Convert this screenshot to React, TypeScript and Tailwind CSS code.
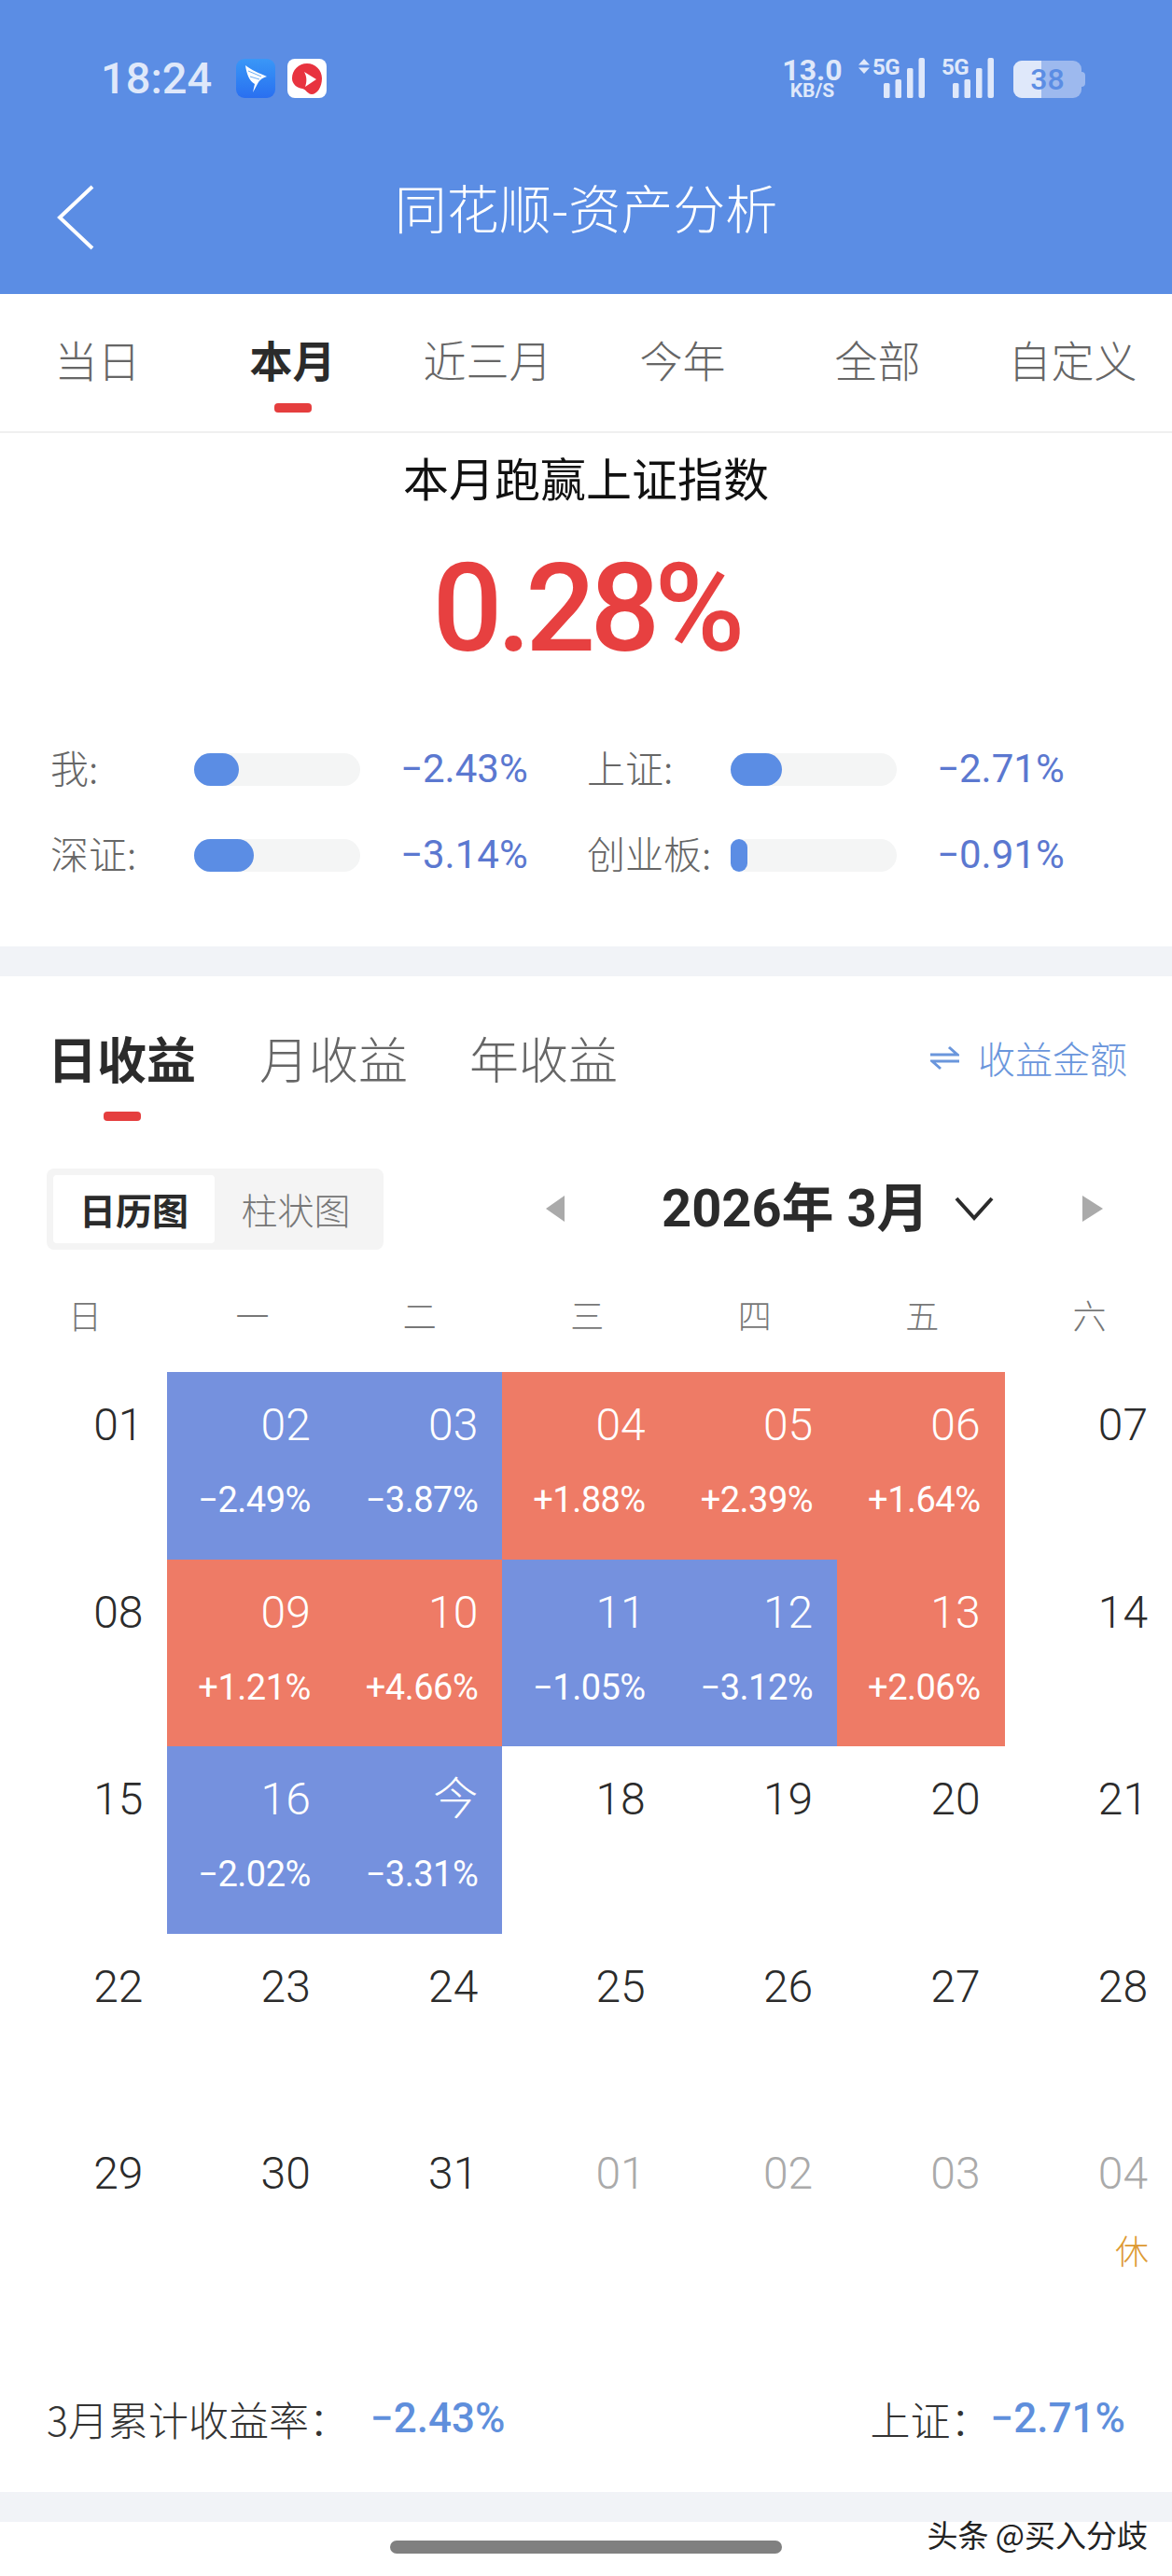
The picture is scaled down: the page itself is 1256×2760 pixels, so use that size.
import React from "react";

const cjk = "font-['Noto_Sans_CJK_SC','Noto_Sans',sans-serif]";
const num = "font-['Roboto','Noto_Sans_CJK_SC',sans-serif]";

type Day = { d: string; pct?: string; tone?: "up" | "down"; muted?: boolean; rest?: boolean };

const rows: Day[][] = [
  [
    { d: "01" },
    { d: "02", pct: "−2.49%", tone: "down" },
    { d: "03", pct: "−3.87%", tone: "down" },
    { d: "04", pct: "+1.88%", tone: "up" },
    { d: "05", pct: "+2.39%", tone: "up" },
    { d: "06", pct: "+1.64%", tone: "up" },
    { d: "07" },
  ],
  [
    { d: "08" },
    { d: "09", pct: "+1.21%", tone: "up" },
    { d: "10", pct: "+4.66%", tone: "up" },
    { d: "11", pct: "−1.05%", tone: "down" },
    { d: "12", pct: "−3.12%", tone: "down" },
    { d: "13", pct: "+2.06%", tone: "up" },
    { d: "14" },
  ],
  [
    { d: "15" },
    { d: "16", pct: "−2.02%", tone: "down" },
    { d: "今", pct: "−3.31%", tone: "down" },
    { d: "18" },
    { d: "19" },
    { d: "20" },
    { d: "21" },
  ],
  [{ d: "22" }, { d: "23" }, { d: "24" }, { d: "25" }, { d: "26" }, { d: "27" }, { d: "28" }],
  [
    { d: "29" },
    { d: "30" },
    { d: "31" },
    { d: "01", muted: true },
    { d: "02", muted: true },
    { d: "03", muted: true },
    { d: "04", muted: true, rest: true },
  ],
];

const Signal = () => (
  <svg width="44" height="43" viewBox="0 0 44 43" fill="#dfe8fa">
    <rect x="0" y="27" width="6.5" height="16" rx="1.5" />
    <rect x="12.5" y="23" width="6.5" height="20" rx="1.5" />
    <rect x="25" y="11" width="6.5" height="32" rx="1.5" />
    <rect x="37.5" y="0" width="6.5" height="43" rx="2" />
  </svg>
);

const StatusBar = () => (
  <div className="flex h-[105px] items-start justify-between pl-[108px] pr-[93px] pt-[62px] text-[#dfe8fa]">
    <div className="flex h-[43px] items-center">
      <span className={`${num} w-[145px] text-[47px] font-medium leading-[43px]`}>18:24</span>
      <div className="flex h-[42px] w-[42px] items-center justify-center rounded-[9px] bg-gradient-to-b from-[#3a97f7] to-[#2a6ff0]">
        <svg width="42" height="42" viewBox="0 0 42 42">
          <path d="M10 7c6 5 16 9 23 12-4 1-7 3-9 6l-6 11 2-9c-6-3-9-12-10-20z" fill="#fff" />
          <path d="M13 13l14 6M15 19l10 3" stroke="#6aaef8" strokeWidth="1" fill="none" />
        </svg>
      </div>
      <div className="ml-[13px] flex h-[42px] w-[42px] items-center justify-center rounded-[8px] bg-white">
        <svg width="42" height="42" viewBox="0 0 42 42">
          <path d="M21 5c9 0 16 7 16 16 0 9-5 17-11 17-4 0-6-5-10-6-6-1-11-5-11-11C5 12 12 5 21 5z" fill="#e8333f" />
          <path d="M18 14l13 8-12 8c2-5 2-11-1-16z" fill="#fff" />
        </svg>
      </div>
    </div>
    <div className="flex h-[43px] items-start">
      <div className="flex w-[63px] flex-col items-center">
        <span className={`${num} text-[32px] font-bold leading-[27px]`}>13.0</span>
        <span className={`${num} text-[21px] font-bold leading-[16px]`}>KB/S</span>
      </div>
      <div className="relative ml-[18px] h-[43px] w-[71px]">
        <svg className="absolute left-0 top-[1px]" width="12" height="16" viewBox="0 0 12 16" fill="#dfe8fa">
          <path d="M6 0l6 6.5H0zM6 16L0 9.5h12z" />
        </svg>
        <span className={`${num} absolute left-[15px] top-0 text-[24px] font-bold leading-[20px] tracking-[-0.5px]`}>5G</span>
        <div className="absolute right-0 top-0">
          <Signal />
        </div>
      </div>
      <div className="relative ml-[18px] h-[43px] w-[56px]">
        <span className={`${num} absolute left-0 top-0 text-[24px] font-bold leading-[20px] tracking-[-0.5px]`}>5G</span>
        <div className="absolute right-0 top-0">
          <Signal />
        </div>
      </div>
      <div className="relative ml-[21px] mt-[3px] flex h-[40px] w-[73px] overflow-hidden rounded-[9px] bg-[#9db9ee]">
        <div className="h-full w-[30px] bg-[#dfe8fa]" />
        <span className={`${num} absolute inset-0 flex items-center justify-center text-[32px] font-medium text-[#5b8de4]`}>38</span>
      </div>
      <div className="mt-[15px] h-[16px] w-[4px] rounded-r bg-[#9db9ee]" />
    </div>
  </div>
);

const Tab = ({ label, active }: { label: string; active?: boolean }) => (
  <div className="relative flex h-full w-[209px] items-start justify-center pt-[40px]">
    <span className={`text-[46px] leading-[58px] ${active ? "font-bold text-[#2b2b2b]" : "font-light text-[#666]"}`}>{label}</span>
    {active && <div className="absolute bottom-[20px] left-1/2 h-[10px] w-[40px] -translate-x-1/2 rounded-sm bg-[#e53e3e]" />}
  </div>
);

const Stat = ({ label, fill, value }: { label: string; fill: number; value: string }) => (
  <div className="flex items-center">
    <span className="w-[154px] pb-[6px] text-[41px] font-light leading-[50px] text-[#666] whitespace-nowrap">{label}</span>
    <div className="h-[35px] w-[178px] rounded-full bg-[#f4f5f5]">
      <div className="h-full rounded-full bg-[#5b8de4]" style={{ width: fill }} />
    </div>
    <span className={`${num} ml-[43px] text-[42px] font-[450] leading-[50px] text-[#5b78d0]`}>{value}</span>
  </div>
);

const Cell = ({ day }: { day: Day }) => {
  const bg = day.tone === "up" ? "bg-[#ee7b66]" : day.tone === "down" ? "bg-[#7591de]" : "";
  const color = day.tone ? "text-white" : day.muted ? "text-[#aaa]" : "text-[#2b2b2b]";
  return (
    <div className={`relative h-[200.5px] pr-[26px] pt-[30px] text-right ${bg} ${color}`}>
      <div className={`${num} text-[48px] font-light leading-[54px]`}>{day.d}</div>
      {day.pct && (
        <div className={`${num} mt-[33px] -ml-[10px] text-[38px] font-[450] leading-[40px] tracking-[-0.5px] whitespace-nowrap`}>{day.pct}</div>
      )}
      {day.rest && <div className="absolute right-[25px] top-[115px] text-[36px] font-light leading-[46px] text-[#dd9a33]">休</div>}
    </div>
  );
};

const weekdays = ["日", "一", "二", "三", "四", "五", "六"];

export default function App() {
  return (
    <div className={`${cjk} h-[2760px] w-[1256px] overflow-hidden bg-white`}>
      <div className="h-[315px] bg-[#5b8de4]">
        <StatusBar />
        <div className="relative mt-[80px] flex items-center justify-center text-white">
          <svg className="absolute left-[60px] top-[13px]" width="42" height="70" viewBox="0 0 42 70" fill="none" stroke="#fff" strokeWidth="4">
            <path d="M39 2L4 35l35 33" />
          </svg>
          <span className="text-[56px] font-light leading-[72px]">同花顺-资产分析</span>
        </div>
      </div>

      <div className="flex h-[149px] items-stretch border-b-2 border-[#f0f0f0]">
        <Tab label="当日" />
        <Tab label="本月" active />
        <Tab label="近三月" />
        <Tab label="今年" />
        <Tab label="全部" />
        <Tab label="自定义" />
      </div>

      <div className="h-[550px]">
        <div className="pt-[17px] text-center text-[49px] font-normal leading-[60px] text-[#111]">本月跑赢上证指数</div>
        <div className={`${num} mt-[46px] text-center text-[132px] font-medium leading-[130px] tracking-[-6px] text-[#e74040]`}>0.28%</div>
        <div className="mt-[79px] grid grid-cols-[575px_1fr] gap-y-[36px] pl-[54px]">
          <Stat label="我:" fill={48} value="−2.43%" />
          <Stat label="上证:" fill={55} value="−2.71%" />
          <Stat label="深证:" fill={64} value="−3.14%" />
          <Stat label="创业板:" fill={18} value="−0.91%" />
        </div>
      </div>

      <div className="h-[32px] bg-[#f1f3f7]" />

      <div className="flex h-[205px] items-start pl-[51px] pr-[48px] pt-[52px]">
        <div className="relative text-[53px] font-bold leading-[70px] text-[#2b2b2b]">
          日收益
          <div className="absolute left-[60px] top-[93px] h-[10px] w-[40px] rounded-sm bg-[#e53e3e]" />
        </div>
        <div className="ml-[68px] text-[53px] font-light leading-[70px] text-[#666]">月收益</div>
        <div className="ml-[66px] text-[53px] font-light leading-[70px] text-[#666]">年收益</div>
        <div className="ml-auto mt-[8px] flex items-center text-[#6a96dc]">
          <svg className="mr-[20px]" width="31" height="27" viewBox="0 0 31 27" fill="none" stroke="#6a96dc" strokeWidth="3">
            <path d="M0 10h29L20 2M31 17H2l9 8" />
          </svg>
          <span className="text-[40px] font-light leading-[54px]">收益金额</span>
        </div>
      </div>

      <div className="flex h-[88px] items-center pl-[50px] pr-[74px]">
        <div className="flex h-[87px] w-[361px] rounded-lg bg-[#f4f4f4] p-[7px]">
          <div className="flex w-[173px] items-center justify-center rounded bg-white text-[39px] font-bold text-[#2b2b2b]">日历图</div>
          <div className="flex flex-1 items-center justify-center text-[39px] font-light text-[#777]">柱状图</div>
        </div>
        <svg className="ml-[174px]" width="20" height="28" viewBox="0 0 20 28" fill="#aaa">
          <path d="M20 0v28L0 14z" />
        </svg>
        <span className={`${num} ml-[104px] w-[276px] text-[56px] font-bold leading-[70px] whitespace-nowrap text-[#2b2b2b]`}>2026年 3月</span>
        <svg className="ml-[38px]" width="42" height="26" viewBox="0 0 42 26" fill="none" stroke="#2b2b2b" strokeWidth="4">
          <path d="M2 2l19 21L40 2" />
        </svg>
        <svg className="ml-auto" width="22" height="28" viewBox="0 0 22 28" fill="#aaa">
          <path d="M0 0v28l22-14z" />
        </svg>
      </div>

      <div className="mt-[45px] grid h-[48px] grid-cols-7 text-[36px] font-light leading-[48px] text-[#777]">
        {weekdays.map((w) => (
          <div key={w} className="pl-[73px]">{w}</div>
        ))}
      </div>

      <div className="mt-[38px] grid grid-cols-7">
        {rows.map((row, i) =>
          row.map((day, j) => <Cell key={`${i}-${j}`} day={day} />)
        )}
      </div>

      <div className="mt-[90px] flex items-center justify-between px-[50px] text-[43px] font-light leading-[56px] text-[#333]">
        <div className="flex items-center">
          <span>3月累计收益率：</span>
          <span className={`${num} ml-[23px] text-[44px] font-medium text-[#5f8fdc]`}>−2.43%</span>
        </div>
        <div className="flex items-center">
          <span>上证：</span>
          <span className={`${num} text-[44px] font-medium text-[#5f8fdc]`}>−2.71%</span>
        </div>
      </div>

      <div className="mt-[51px] h-[32px] bg-[#f1f3f7]" />

      <div className="relative h-[59px]">
        <div className="absolute left-[418px] top-[20px] h-[14px] w-[420px] rounded-full bg-[#808080]" />
        <div className="absolute right-[26px] top-[-8px] text-[33px] leading-[42px] text-[#222]">头条 @买入分歧</div>
      </div>
    </div>
  );
}
